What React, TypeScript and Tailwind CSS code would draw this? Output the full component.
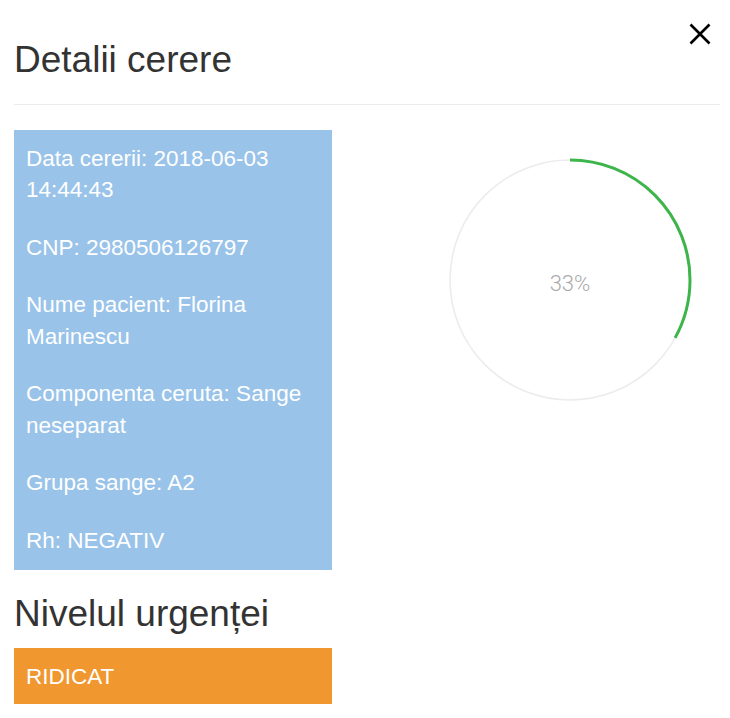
import React from 'react';

const details: string[] = [
  'Data cererii: 2018-06-03 14:44:43',
  'CNP: 2980506126797',
  'Nume pacient: Florina Marinescu',
  'Componenta ceruta: Sange neseparat',
  'Grupa sange: A2',
  'Rh: NEGATIV',
];

const ProgressRing: React.FC<{ percent: number }> = ({ percent }) => {
  const r = 120;
  const c = 2 * Math.PI * r;
  return (
    <div className="relative w-[244px] h-[244px]">
      <svg width="244" height="244" viewBox="0 0 244 244">
        <circle cx="122" cy="122" r={r} fill="none" stroke="#ececec" strokeWidth="1.6" />
        <circle
          cx="122"
          cy="122"
          r={r}
          fill="none"
          stroke="#3db54a"
          strokeWidth="3"
          strokeDasharray={`${(c * percent) / 100} ${c}`}
          transform="rotate(-90 122 122)"
        />
      </svg>
      <span className="absolute inset-0 flex items-center justify-center pt-[6px] text-[22px] font-light text-[#a9a9a9] font-['Roboto',sans-serif]">
        {percent}%
      </span>
    </div>
  );
};

export default function App() {
  return (
    <div className="bg-white min-h-[718px] pl-[14px] pr-[10px] text-[#333] font-['Liberation_Sans',Arial,sans-serif]">
      {/* header */}
      <div className="flex justify-between items-start border-b border-[#ebebeb] pb-[24px]">
        <h1 className="pt-[40px] text-[37px] leading-[40px] font-normal">Detalii cerere</h1>
        <button className="mt-[23px] mr-[9px] w-[22px] h-[22px] flex items-center justify-center text-black">
          <svg width="22" height="22" viewBox="0 0 22 22">
            <path d="M1.5 1.5 L20.5 20.5 M20.5 1.5 L1.5 20.5" stroke="currentColor" strokeWidth="2.6" />
          </svg>
        </button>
      </div>

      <div className="flex items-start mt-[25px]">
        <div className="w-[318px] shrink-0">
          <div className="bg-[#99c3e9] text-white px-3 pt-[13px] pb-[14px] text-[22.5px] leading-[31.43px]">
            {details.map((d, i) => (
              <p key={i} className={i < details.length - 1 ? 'mb-[26px]' : ''}>
                {d}
              </p>
            ))}
          </div>

          <h2 className="mt-[24px] mb-[14px] text-[37px] leading-[40px] font-normal">Nivelul urgenței</h2>
          <div className="bg-[#f0972f] text-white px-3 pt-[13px] pb-[11px] text-[22.5px] leading-[32px]">RIDICAT</div>
        </div>

        <div className="ml-[116px] mt-[28px]">
          <ProgressRing percent={33} />
        </div>
      </div>
    </div>
  );
}
